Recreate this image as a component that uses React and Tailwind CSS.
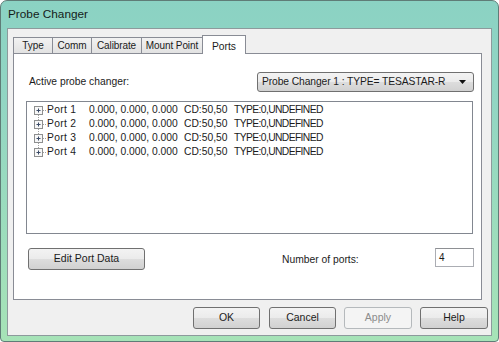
import React from 'react';

const font = { fontFamily: '"Liberation Sans", Arial, sans-serif' };

const ports = [1, 2, 3, 4];

// tree glyph: plus box with dotted connectors
const TreeGlyph = ({ first, last }) => (
  <svg width="20" height="14" viewBox="0 0 20 14" className="shrink-0">
    {!first && <line x1="11.5" y1="0" x2="11.5" y2="3" stroke="#a0a0a0" strokeDasharray="1 1" />}
    {!last && <line x1="11.5" y1="12" x2="11.5" y2="14" stroke="#a0a0a0" strokeDasharray="1 1" />}
    <line x1="16" y1="7.5" x2="20" y2="7.5" stroke="#a0a0a0" strokeDasharray="1 1" />
    <rect x="7.5" y="3.5" width="8" height="8" fill="#f7f7f7" stroke="#8e8f8f" />
    <line x1="9.5" y1="7.5" x2="13.5" y2="7.5" stroke="#3a4a66" />
    <line x1="11.5" y1="5.5" x2="11.5" y2="9.5" stroke="#3a4a66" />
  </svg>
);

const Button = ({ children, w, disabled, className = '' }) => (
  <div
    className={`h-[22px] flex items-center justify-center rounded-[3px] border text-[10.5px] ${
      disabled
        ? 'border-[#b5b9bc] bg-[#f4f4f4] text-[#8c8c8c]'
        : 'border-[#707070] bg-[linear-gradient(to_bottom,#f3f3f3_0%,#ebebeb_50%,#dddddd_51%,#d1d1d1_100%)] text-[#1b1b1b]'
    } ${w} ${className}`}
  >
    {children}
  </div>
);

const Tab = ({ label, w, active }) =>
  active ? (
    <div
      className={`relative z-10 -mb-px -ml-px h-[19px] ${w} flex items-start justify-center pt-[3px] bg-white border border-b-0 border-[#898c95] text-[10.3px] text-[#1b1b1b]`}
    >
      {label}
    </div>
  ) : (
    <div
      className={`h-[16px] ${w} -ml-px first:ml-0 flex items-center justify-center bg-[linear-gradient(to_bottom,#f2f2f2,#e2e2e2)] border border-b-0 border-[#898c95] text-[10px] tracking-[-0.1px] text-[#1b1b1b]`}
    >
      {label}
    </div>
  );

export default function App() {
  return (
    <div style={font} className="w-[499px] h-[342px] overflow-hidden">
      <div className="w-[499px] h-[342px] flex flex-col px-[6px] border border-[#5f7c77] rounded-t-[7px] rounded-b-[4px] bg-[linear-gradient(to_bottom,#8bd2c3_0%,#92d6c3_30%,#a6e3b7_100%)]">
        {/* title bar */}
        <div className="h-[27px] flex items-center pl-px text-[11.8px] text-[#141c1a]">Probe Changer</div>

        {/* client area */}
        <div className="h-[308px] border border-[#8d9a9c] bg-[#f0f0f0] flex flex-col">
          {/* tabs */}
          <div className="mt-[6px] ml-[5px] h-[18px] flex items-end">
            <Tab label="Type" w="w-[40px]" />
            <Tab label="Comm" w="w-[40px]" />
            <Tab label="Calibrate" w="w-[51px]" />
            <Tab label="Mount Point" w="w-[62px]" />
            <Tab label="Ports" w="w-[44px]" active />
          </div>

          {/* tab panel */}
          <div className="ml-[5px] w-[469px] h-[247px] border border-[#898c95] bg-white flex flex-col text-[10.3px] text-[#1b1b1b]">
            <div className="mt-[18px] flex items-center justify-between pl-[15px] pr-[7px]">
              <span>Active probe changer:</span>
              <div className="w-[217px] h-[20px] flex items-center justify-between pl-[4px] pr-[7px] rounded-[3px] border border-[#707070] bg-[linear-gradient(to_bottom,#f3f3f3_0%,#ebebeb_50%,#dddddd_51%,#d1d1d1_100%)]">
                <span className="tracking-[-0.1px]">Probe Changer 1 : TYPE= TESASTAR-R</span>
                <svg width="7" height="4" viewBox="0 0 7 4">
                  <path d="M0 0 H7 L3.5 4 Z" fill="#111" />
                </svg>
              </div>
            </div>

            {/* list */}
            <div className="mt-[9px] ml-[12px] w-[447px] h-[133px] border border-[#828790] pt-px">
              {ports.map((p, i) => (
                <div key={p} className="h-[14px] flex items-center">
                  <TreeGlyph first={i === 0} last={i === ports.length - 1} />
                  <span className="w-[42px] tracking-[0.3px]">Port {p}</span>
                  <span className="w-[95px]">0.000, 0.000, 0.000</span>
                  <span className="w-[50px]">CD:50,50</span>
                  <span className="tracking-[-0.6px]">TYPE:0,UNDEFINED</span>
                </div>
              ))}
            </div>

            <div className="mt-[14px] flex items-start pl-[14px]">
              <Button w="w-[117px]">Edit Port Data</Button>
              <span className="ml-[137px] mt-[4px]">Number of ports:</span>
              <div className="ml-auto mr-[7px] w-[39px] h-[19px] border border-[#abadb3] border-t-[#8e9094] pl-[3px] flex items-center text-[10px]">
                4
              </div>
            </div>
          </div>

          {/* dialog buttons */}
          <div className="mt-[7px] flex justify-end pr-[3px]">
            <Button w="w-[67px]">OK</Button>
            <Button w="w-[67px]" className="ml-[9px]">Cancel</Button>
            <Button w="w-[68px]" className="ml-[8px]" disabled>Apply</Button>
            <Button w="w-[68px]" className="ml-[8px]">Help</Button>
          </div>
        </div>
      </div>
    </div>
  );
}
